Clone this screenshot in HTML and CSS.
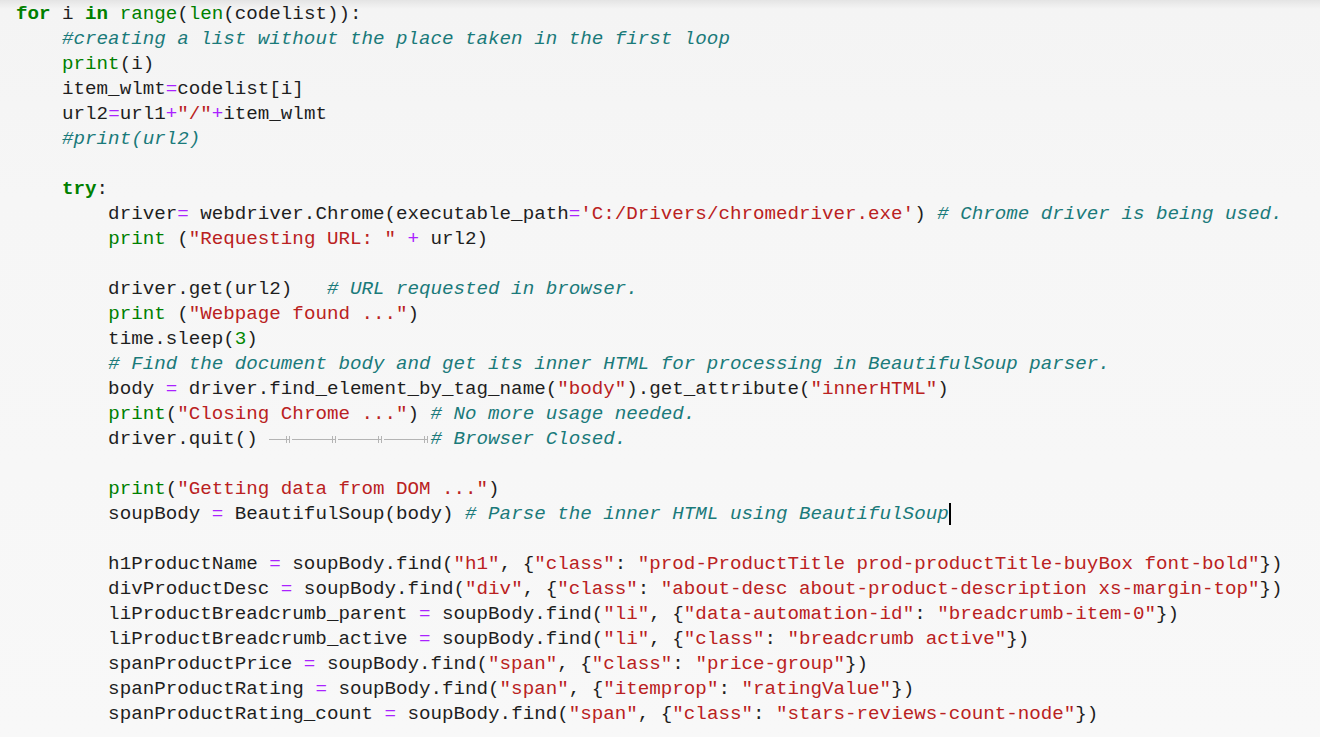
FILE: index.html
```html
<!DOCTYPE html>
<html>
<head>
<meta charset="utf-8">
<link rel="stylesheet" href="styles.css">
</head>
<body>
<div class="code">
<div class="ln"><span class="k">for</span> i <span class="k">in</span> <span class="b">range</span>(<span class="b">len</span>(codelist)):</div>
<div class="ln">    <span class="c">#creating a list without the place taken in the first loop</span></div>
<div class="ln">    <span class="b">print</span>(i)</div>
<div class="ln">    item_wlmt<span class="o">=</span>codelist[i]</div>
<div class="ln">    url2<span class="o">=</span>url1<span class="o">+</span><span class="s">"/"</span><span class="o">+</span>item_wlmt</div>
<div class="ln">    <span class="c">#print(url2)</span></div>
<div class="ln"> </div>
<div class="ln">    <span class="k">try</span>:</div>
<div class="ln">        driver<span class="o">=</span> webdriver.Chrome(executable_path<span class="o">=</span><span class="s">'C:/Drivers/chromedriver.exe'</span>) <span class="c"># Chrome driver is being used.</span></div>
<div class="ln">        <span class="b">print</span> (<span class="s">"Requesting URL: "</span> <span class="o">+</span> url2)</div>
<div class="ln"> </div>
<div class="ln">        driver.get(url2)   <span class="c"># URL requested in browser.</span></div>
<div class="ln">        <span class="b">print</span> (<span class="s">"Webpage found ..."</span>)</div>
<div class="ln">        time.sleep(<span class="n">3</span>)</div>
<div class="ln">        <span class="c"># Find the document body and get its inner HTML for processing in BeautifulSoup parser.</span></div>
<div class="ln">        body <span class="o">=</span> driver.find_element_by_tag_name(<span class="s">"body"</span>).get_attribute(<span class="s">"innerHTML"</span>)</div>
<div class="ln">        <span class="b">print</span>(<span class="s">"Closing Chrome ..."</span>) <span class="c"># No more usage needed.</span></div>
<div class="ln">        driver.quit() <span class="tab t2"></span><span class="tab t4"></span><span class="tab t4"></span><span class="tab t4"></span><span class="c"># Browser Closed.</span></div>
<div class="ln"> </div>
<div class="ln">        <span class="b">print</span>(<span class="s">"Getting data from DOM ..."</span>)</div>
<div class="ln">        soupBody <span class="o">=</span> BeautifulSoup(body) <span class="c"># Parse the inner HTML using BeautifulSoup</span><span class="cursor"></span></div>
<div class="ln"> </div>
<div class="ln">        h1ProductName <span class="o">=</span> soupBody.find(<span class="s">"h1"</span>, {<span class="s">"class"</span>: <span class="s">"prod-ProductTitle prod-productTitle-buyBox font-bold"</span>})</div>
<div class="ln">        divProductDesc <span class="o">=</span> soupBody.find(<span class="s">"div"</span>, {<span class="s">"class"</span>: <span class="s">"about-desc about-product-description xs-margin-top"</span>})</div>
<div class="ln">        liProductBreadcrumb_parent <span class="o">=</span> soupBody.find(<span class="s">"li"</span>, {<span class="s">"data-automation-id"</span>: <span class="s">"breadcrumb-item-0"</span>})</div>
<div class="ln">        liProductBreadcrumb_active <span class="o">=</span> soupBody.find(<span class="s">"li"</span>, {<span class="s">"class"</span>: <span class="s">"breadcrumb active"</span>})</div>
<div class="ln">        spanProductPrice <span class="o">=</span> soupBody.find(<span class="s">"span"</span>, {<span class="s">"class"</span>: <span class="s">"price-group"</span>})</div>
<div class="ln">        spanProductRating <span class="o">=</span> soupBody.find(<span class="s">"span"</span>, {<span class="s">"itemprop"</span>: <span class="s">"ratingValue"</span>})</div>
<div class="ln">        spanProductRating_count <span class="o">=</span> soupBody.find(<span class="s">"span"</span>, {<span class="s">"class"</span>: <span class="s">"stars-reviews-count-node"</span>})</div>
</div>
</body>
</html>
```
FILE: styles.css
```css
html, body {
  margin: 0;
  padding: 0;
  height: 100%;
}
body {
  background: linear-gradient(#e4e4e4 0px, #efefef 6px, #f4f4f4 9px, #f6f6f6 200px, #f8f8f8 737px);
  overflow: hidden;
}
.code {
  padding: 2px 0 0 16px;
  font-family: "Liberation Mono", monospace;
  font-size: 19.2px;
  color: #1e1e1e;
}
.ln {
  white-space: pre;
  height: 25px;
  line-height: 25px;
}
.k { color: #008000; font-weight: bold; }
.b { color: #008000; }
.c { color: #1a7a7a; font-style: italic; }
.s { color: #ba2121; }
.o { color: #aa22ff; }
.n { color: #008800; }
.tab {
  display: inline-block;
  position: relative;
  height: 25px;
  vertical-align: top;
  background: linear-gradient(#b4b4b4, #b4b4b4) no-repeat left 0 top 12px / calc(100% - 3px) 1px;
}
.t2 { width: 2ch; }
.t4 { width: 4ch; }
.tab::after {
  content: "";
  position: absolute;
  right: 2px;
  top: 9px;
  width: 4px;
  height: 7px;
  border-left: 1px solid #b4b4b4;
  border-right: 1px solid #b4b4b4;
  box-sizing: border-box;
}
.cursor {
  display: inline-block;
  width: 2px;
  height: 22px;
  background: #000;
  vertical-align: top;
  margin-top: 1px;
}
```
